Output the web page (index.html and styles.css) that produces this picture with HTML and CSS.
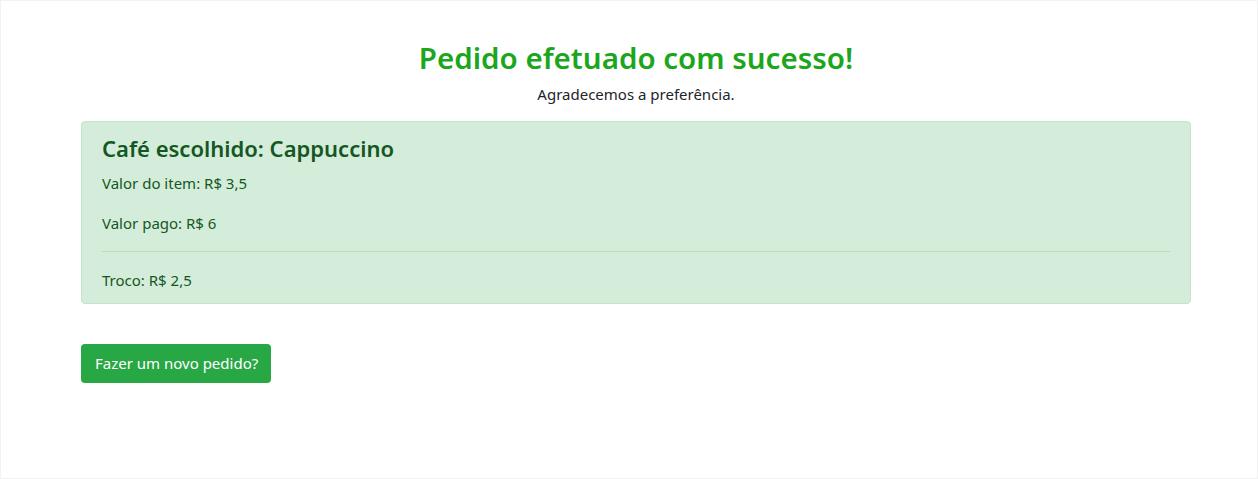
FILE: index.html
```html
<!DOCTYPE html>
<html lang="pt-BR">
<head>
<meta charset="utf-8">
<title>Pedido efetuado</title>
<link rel="stylesheet" href="styles.css">
</head>
<body>
<div class="page">
  <main class="container">
    <header class="intro">
      <h1 class="title">Pedido efetuado com sucesso!</h1>
      <p class="subtitle">Agradecemos a preferência.</p>
    </header>
    <section class="alert">
      <h4 class="alert-heading">Café escolhido: Cappuccino</h4>
      <p class="line">Valor do item: R$ 3,5</p>
      <p class="line">Valor pago: R$ 6</p>
      <hr class="divider">
      <p class="line last">Troco: R$ 2,5</p>
    </section>
    <a class="btn" href="#">Fazer um novo pedido?</a>
  </main>
</div>
</body>
</html>
```

FILE: styles.css
```css
* { box-sizing: border-box; }
html, body { margin: 0; padding: 0; }
body {
  font-family: "Noto Sans", "Open Sans", "DejaVu Sans", sans-serif;
  color: #212529;
  background: #fff;
  font-size: 15px;
}
.page {
  min-height: 100vh;
  border: 1px solid #f2f2f2;
  padding: 0 66px 0 80px;
}
.container {
  display: flex;
  flex-direction: column;
  align-items: flex-start;
  width: 1110px;
}
.intro {
  align-self: stretch;
  text-align: center;
  padding-top: 36px;
}
.title {
  margin: 0;
  font-size: 29.5px;
  font-weight: 600;
  line-height: 42px;
  color: #1ba61b;
}
.subtitle {
  margin: 3px 0 0;
  line-height: 24px;
}
.alert {
  align-self: stretch;
  margin-top: 15px;
  background: #d4edda;
  border: 1px solid #c3e6cb;
  border-radius: 4px;
  padding: 12px 20px 11px;
  color: #155724;
}
.alert-heading {
  margin: 0 0 8px;
  font-size: 22px;
  font-weight: 600;
  line-height: 29px;
  color: #155724;
}
.line {
  margin: 0 0 16px;
  line-height: 24px;
}
.line.last { margin-bottom: 0; }
.divider {
  margin: 0 0 16px;
  border: 0;
  border-top: 1px solid #b1dfbb;
}
.btn {
  margin-top: 40px;
  display: inline-block;
  background: #28a745;
  color: #fff;
  text-decoration: none;
  border-radius: 4px;
  padding: 7px 13px 8px 14px;
  line-height: 24px;
}
```
